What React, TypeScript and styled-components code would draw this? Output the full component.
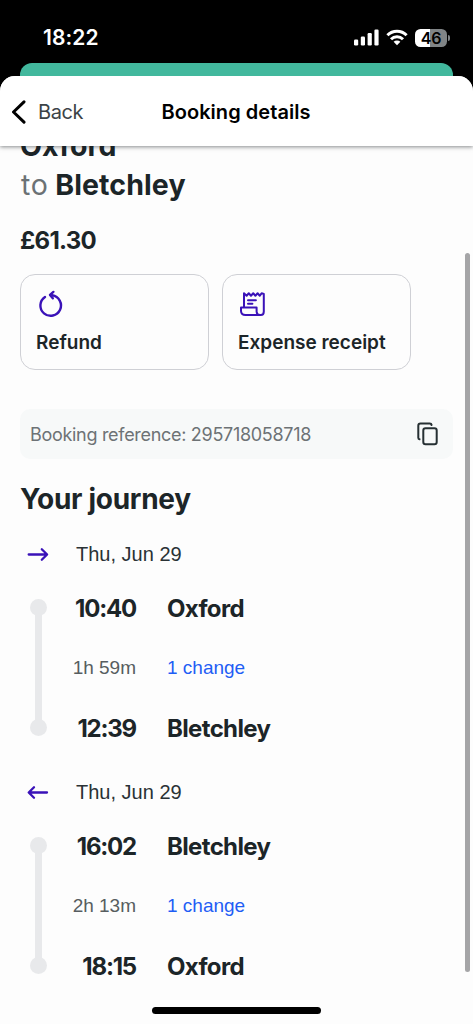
import React from "react";
import styled, { createGlobalStyle } from "styled-components";

const ink = "#1c2528";
const violet = "#3a12b8";
const inter = `Inter, "Liberation Sans", sans-serif`;
const arial = `"Liberation Sans", Arial, sans-serif`;

const Global = createGlobalStyle`
  * { box-sizing: border-box; }
  body { margin: 0; background: #000; overflow: hidden; }
`;

const Phone = styled.div`
  position: relative;
  display: flex;
  flex-direction: column;
  width: 473px;
  height: 1024px;
  overflow: hidden;
  background: #000;
  font-family: ${inter};
  color: ${ink};
  white-space: nowrap;
`;

const StatusBar = styled.div`
  display: flex;
  align-items: center;
  justify-content: space-between;
  height: 63px;
  flex: none;
  padding: 12px 23px 0 43px;
  color: #fff;
`;

const Clock = styled.span`
  font-size: 21px;
  font-weight: 600;
  letter-spacing: 0.1px;
`;

const StatusIcons = styled.div`
  display: flex;
  align-items: center;
  gap: 7px;
`;

const Battery = styled.div`
  display: flex;
  align-items: center;
  gap: 1px;
`;

const BatteryBody = styled.div`
  width: 32px;
  height: 18px;
  border-radius: 5.5px;
  background: linear-gradient(90deg, #fff 0 47%, #808486 47%);
  color: #000;
  font-size: 16px;
  line-height: 18px;
  font-weight: 600;
  letter-spacing: -0.3px;
  text-align: center;
`;

const BatteryTip = styled.div`
  width: 2px;
  height: 6px;
  border-radius: 0 2px 2px 0;
  background: #808486;
`;

const BackSheet = styled.div`
  height: 13px;
  flex: none;
  margin: 0 20px;
  border-radius: 12px 12px 0 0;
  background: #42b89d;
`;

const Sheet = styled.div`
  display: flex;
  flex-direction: column;
  flex: 1;
  min-height: 0;
  border-radius: 15px 15px 0 0;
  overflow: hidden;
  background: #fdfdfd;
`;

const Header = styled.header`
  display: grid;
  grid-template-columns: 1fr auto 1fr;
  align-items: center;
  height: 70px;
  flex: none;
  padding: 1px 12px 0 11px;
  background: #fff;
  box-shadow: 0 1px 4px rgba(20, 25, 30, 0.5);
  z-index: 1;
`;

const BackButton = styled.div`
  display: flex;
  align-items: center;
  gap: 11px;
  font-size: 20px;
  letter-spacing: -0.4px;
  color: #3c4347;
`;

const HeaderTitle = styled.h1`
  margin: 0;
  font-size: 20px;
  font-weight: 600;
  letter-spacing: 0.05px;
  color: #000;
`;

const Content = styled.main`
  display: flex;
  flex-direction: column;
  padding: 0 20px;
`;

const Route = styled.h2`
  margin: -20px 0 0;
  font-size: 28.5px;
  line-height: 39px;
  font-weight: 700;
  letter-spacing: 0.1px;
`;

const Joiner = styled.span`
  margin-left: 1px;
  font-weight: 400;
  color: #6b7275;
  letter-spacing: 0.6px;
`;

const Price = styled.div`
  margin-top: 22px;
  font-size: 24px;
  line-height: 30px;
  font-weight: 700;
  letter-spacing: -0.75px;
`;

const Actions = styled.div`
  display: flex;
  gap: 13px;
  margin-top: 18px;
`;

const ActionCard = styled.div`
  display: flex;
  flex-direction: column;
  justify-content: space-between;
  width: 189px;
  height: 96px;
  padding: 14px 14px 13px 15px;
  border: 1px solid #cfd0d5;
  border-radius: 15px;
`;

const ActionLabel = styled.span`
  font-size: 19px;
  line-height: 26px;
  font-weight: 600;
`;

const Reference = styled.div`
  display: flex;
  align-items: center;
  justify-content: space-between;
  height: 50px;
  width: 433px;
  margin-top: 39px;
  padding: 0 13px 0 10px;
  border-radius: 10px;
  background: #f7f9f9;
  color: #6d7275;
  font-size: 18px;
  letter-spacing: -0.3px;
`;

const SectionTitle = styled.h2`
  margin: 21px 0;
  font-size: 28px;
  line-height: 38px;
  font-weight: 700;
  letter-spacing: -0.3px;
`;

const Leg = styled.section`
  margin-bottom: 19px;
`;

const LegDate = styled.div`
  display: flex;
  align-items: center;
  gap: 27px;
  height: 30px;
  padding-left: 7px;
  margin-bottom: 9px;
  font-family: ${arial};
  font-size: 20px;
  color: #2a3235;
`;

const LegBody = styled.div`
  display: flex;
`;

const Track = styled.div`
  display: flex;
  flex-direction: column;
  align-items: center;
  width: 17px;
  margin: 21px 0 22px 10px;
`;

const Stop = styled.div`
  width: 17px;
  height: 17px;
  border-radius: 50%;
  background: #e8e9eb;
`;

const Line = styled.div`
  flex: 1;
  width: 7px;
  margin: -1px 0;
  background: #e8e9eb;
`;

const Rows = styled.div`
  display: grid;
  grid-template-columns: 89px auto;
  grid-auto-rows: 60px;
  column-gap: 31px;
  align-items: center;
`;

const Time = styled.span`
  text-align: right;
  font-size: 24px;
  font-weight: 700;
  letter-spacing: -1.2px;
`;

const Station = styled.span`
  font-size: 24px;
  font-weight: 700;
  letter-spacing: -0.65px;
`;

const Duration = styled.span`
  text-align: right;
  font-family: ${arial};
  font-size: 19px;
  color: #575d60;
`;

const Changes = styled.a`
  font-family: ${arial};
  font-size: 19px;
  color: #1f5df5;
`;

const ScrollThumb = styled.div`
  position: absolute;
  right: 3px;
  top: 253px;
  width: 5px;
  height: 719px;
  border-radius: 3px;
  background: #a5a5a7;
`;

const HomeIndicator = styled.div`
  position: absolute;
  left: 152px;
  bottom: 10px;
  width: 169px;
  height: 7px;
  border-radius: 4px;
  background: #000;
`;

const SignalIcon = () => (
  <svg width="25" height="17" viewBox="0 0 25 17" fill="#fff">
    <rect x="0" y="10.5" width="4.2" height="6" rx="1.2" />
    <rect x="6.8" y="7.5" width="4.2" height="9" rx="1.2" />
    <rect x="13.6" y="4" width="4.2" height="12.5" rx="1.2" />
    <rect x="20.4" y="0.5" width="4.2" height="16" rx="1.2" />
  </svg>
);

const WifiIcon = () => (
  <svg width="22" height="17" viewBox="0 0 22 17" fill="none" stroke="#fff" strokeWidth="3">
    <path d="M1.4 6.2a13.6 13.6 0 0 1 19.2 0" />
    <path d="M5 10.2a8.5 8.5 0 0 1 12 0" />
    <path d="M11 16.2l-3.4-3.4a4.8 4.8 0 0 1 6.8 0z" fill="#fff" stroke="none" />
  </svg>
);

const ChevronIcon = () => (
  <svg width="16" height="24" viewBox="0 0 16 24" fill="none" stroke="#000" strokeWidth="3" strokeLinecap="round" strokeLinejoin="round">
    <path d="M13 1.8L2.5 12L13 22.2" />
  </svg>
);

const RefundIcon = () => (
  <svg width="30" height="30" viewBox="0 0 30 30" fill="none" stroke={violet} strokeWidth="2.4" strokeLinecap="round" strokeLinejoin="round">
    <path d="M9 7.9A10.3 10.3 0 1 0 16.2 6.3" />
    <path d="M17.4 2.9L14 5.9L16.8 9.3" />
  </svg>
);

const ReceiptIcon = () => (
  <svg width="30" height="30" viewBox="0 0 30 30" fill="none" stroke={violet} strokeWidth="2" strokeLinecap="round" strokeLinejoin="round">
    <path d="M6 18.3V4.3L8.6 6.7L10.8 4.3L13 6.7L15.2 4.3L17.4 6.7L19.6 4.3L21.8 6.7L23.6 4.3L25.8 5V22.5Q25.8 26 22.8 26H7.4Q3.2 26 3 22V18.5H18.6V22.8Q18.8 26 22 26" />
    <path d="M10 11.2H17.9M10 14.8H14.4" />
  </svg>
);

const CopyIcon = () => (
  <svg width="24" height="26" viewBox="0 0 24 26" fill="none" stroke="#263033" strokeWidth="2" strokeLinecap="round" strokeLinejoin="round">
    <rect x="7.3" y="7.2" width="13.4" height="16" rx="2.2" />
    <path d="M3.5 18.3Q2.3 18.1 2.3 16.7V4.8Q2.3 2.6 4.5 2.6H13.7Q15.4 2.6 15.6 4" />
  </svg>
);

const ArrowIcon = ({ back }: { back?: boolean }) => (
  <svg width="22" height="16" viewBox="0 0 22 16" fill="none" stroke={violet} strokeWidth="2.3" strokeLinecap="round" strokeLinejoin="round">
    {back ? <path d="M20 8.5H2M7 3.2L1.7 8.5L7 13.8" /> : <path d="M1.7 8.5H20M14.8 3.2L20.1 8.5L14.8 13.8" />}
  </svg>
);

type JourneyLeg = {
  back?: boolean;
  date: string;
  depart: [string, string];
  duration: string;
  arrive: [string, string];
};

const legs: JourneyLeg[] = [
  { date: "Thu, Jun 29", depart: ["10:40", "Oxford"], duration: "1h 59m", arrive: ["12:39", "Bletchley"] },
  { back: true, date: "Thu, Jun 29", depart: ["16:02", "Bletchley"], duration: "2h 13m", arrive: ["18:15", "Oxford"] },
];

export default function App() {
  return (
    <Phone>
      <Global />
      <StatusBar>
        <Clock>18:22</Clock>
        <StatusIcons>
          <SignalIcon />
          <WifiIcon />
          <Battery>
            <BatteryBody>46</BatteryBody>
            <BatteryTip />
          </Battery>
        </StatusIcons>
      </StatusBar>
      <BackSheet />
      <Sheet>
        <Header>
          <BackButton>
            <ChevronIcon />
            Back
          </BackButton>
          <HeaderTitle>Booking details</HeaderTitle>
        </Header>
        <Content>
          <Route>
            Oxford
            <br />
            <Joiner>to</Joiner> Bletchley
          </Route>
          <Price>£61.30</Price>
          <Actions>
            <ActionCard>
              <RefundIcon />
              <ActionLabel>Refund</ActionLabel>
            </ActionCard>
            <ActionCard>
              <ReceiptIcon />
              <ActionLabel>Expense receipt</ActionLabel>
            </ActionCard>
          </Actions>
          <Reference>
            Booking reference: 295718058718
            <CopyIcon />
          </Reference>
          <SectionTitle>Your journey</SectionTitle>
          {legs.map((leg) => (
            <Leg key={leg.duration}>
              <LegDate>
                <ArrowIcon back={leg.back} />
                {leg.date}
              </LegDate>
              <LegBody>
                <Track>
                  <Stop />
                  <Line />
                  <Stop />
                </Track>
                <Rows>
                  <Time>{leg.depart[0]}</Time>
                  <Station>{leg.depart[1]}</Station>
                  <Duration>{leg.duration}</Duration>
                  <Changes>1 change</Changes>
                  <Time>{leg.arrive[0]}</Time>
                  <Station>{leg.arrive[1]}</Station>
                </Rows>
              </LegBody>
            </Leg>
          ))}
        </Content>
      </Sheet>
      <ScrollThumb />
      <HomeIndicator />
    </Phone>
  );
}
